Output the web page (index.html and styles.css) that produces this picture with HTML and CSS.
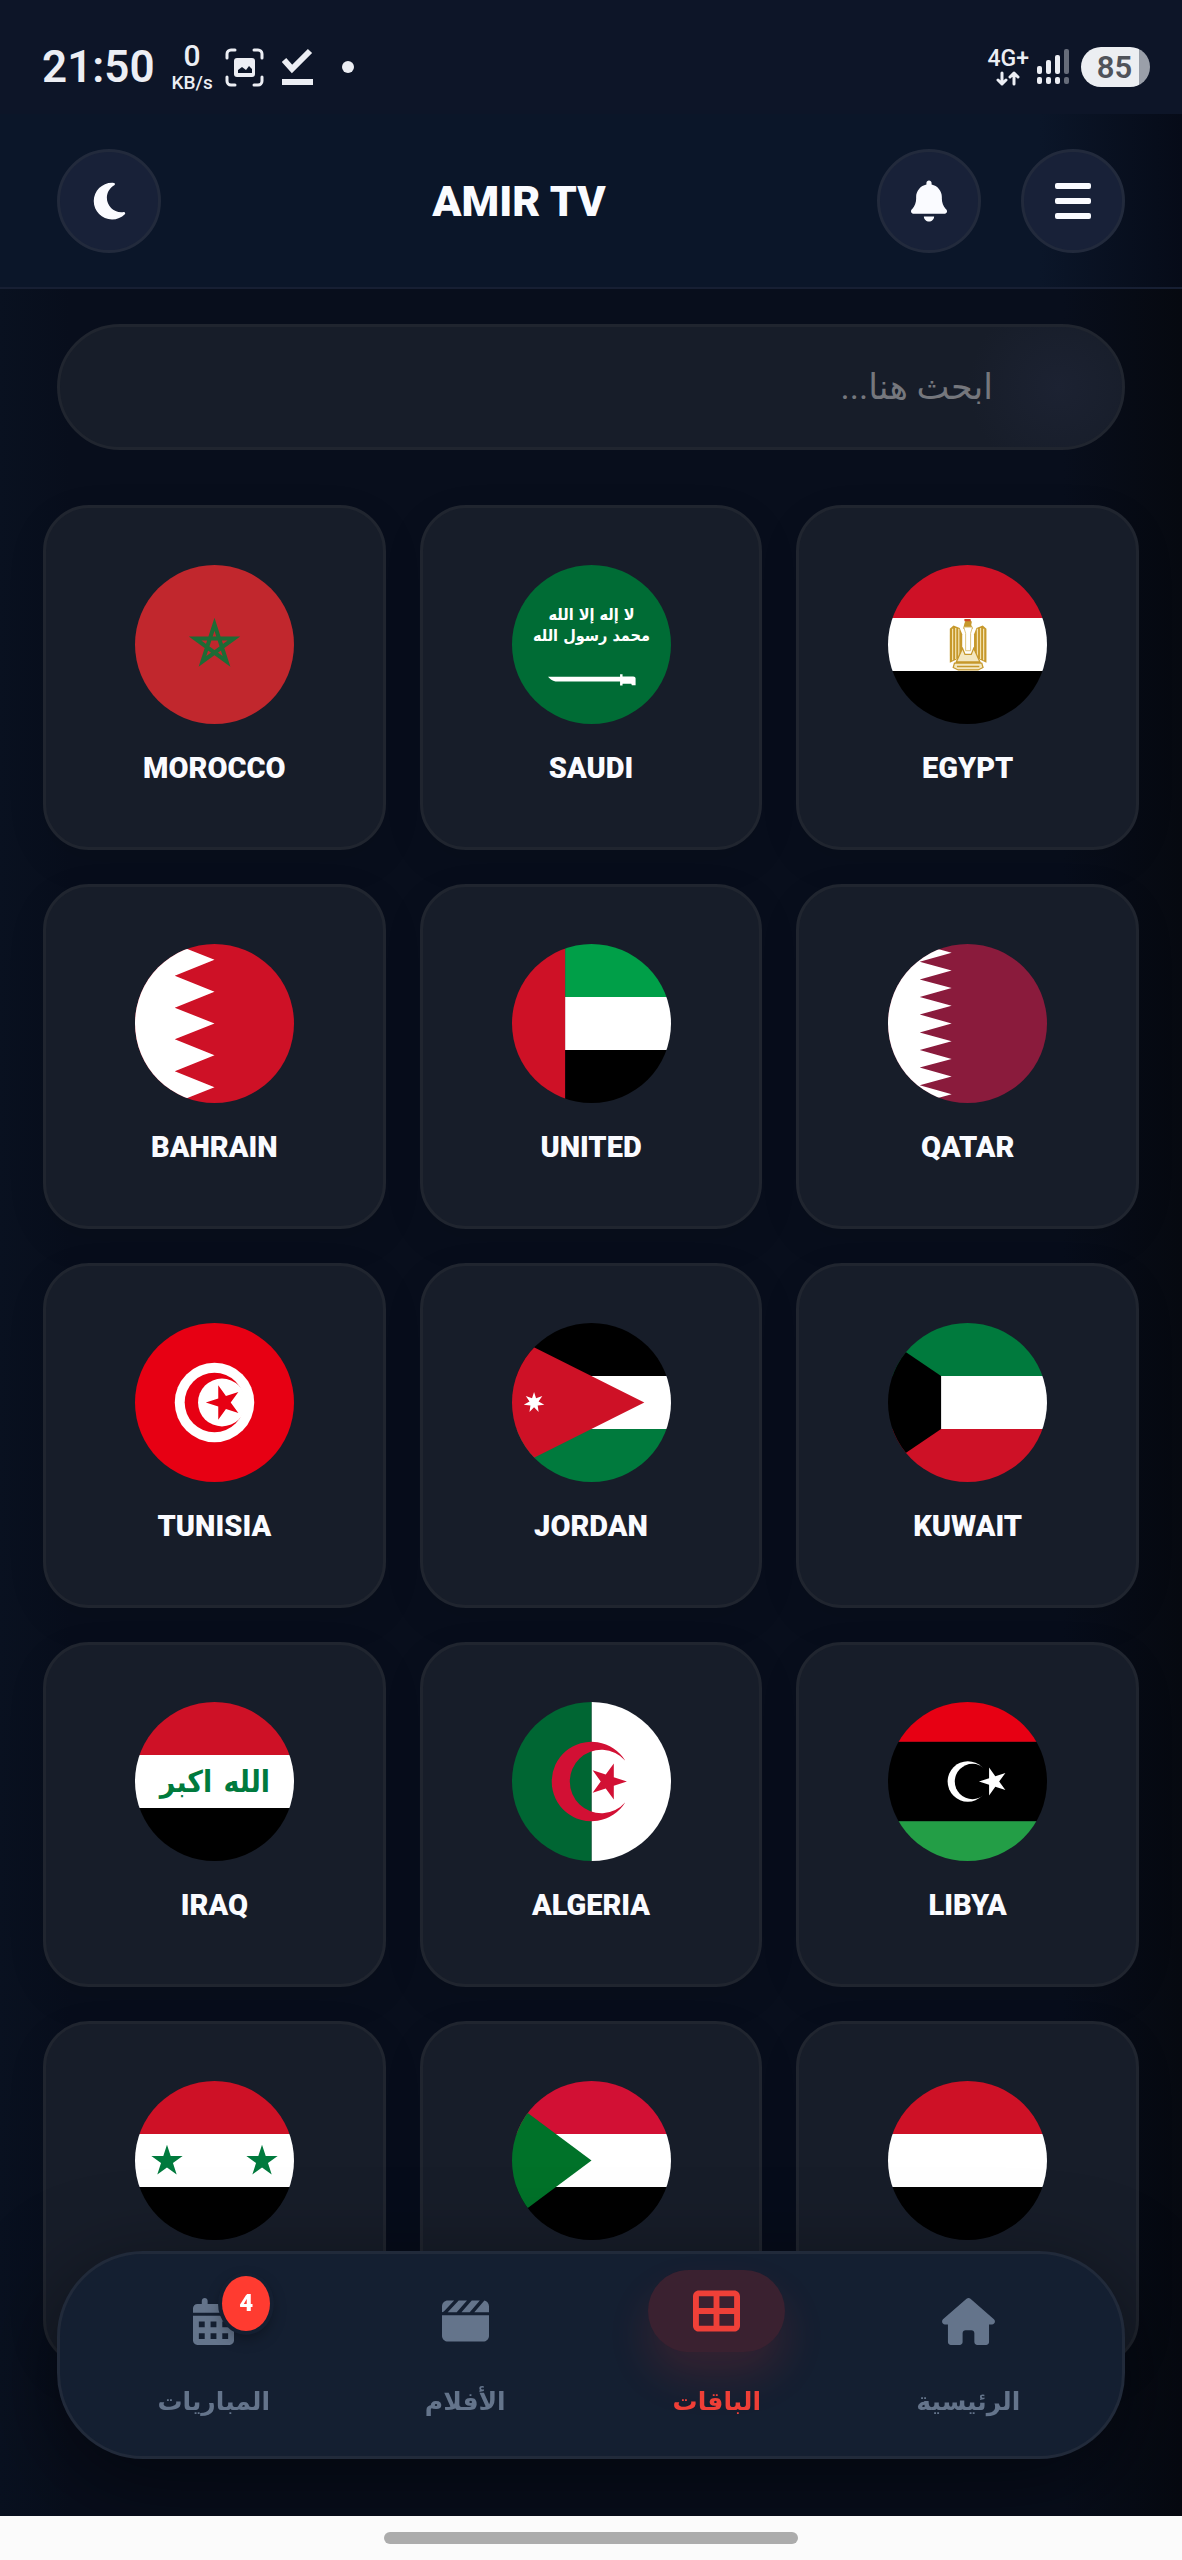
FILE: index.html
```html
<!DOCTYPE html>
<html lang="ar" dir="rtl">
<head>
  <meta charset="UTF-8">
  <meta name="viewport" content="width=device-width, initial-scale=1.0">
  <title>AMIR TV</title>
  <link rel="stylesheet" href="styles.css">
</head>
<body>
  <!-- Shared shapes -->
  <svg class="defs" width="0" height="0" aria-hidden="true">
    <defs>
      <path id="star" d="M0-100 22.5-30.9 95.1-30.9 36.3 11.8 58.8 80.9 0 38.2-58.8 80.9-36.3 11.8-95.1-30.9-22.5-30.9Z"/>
    </defs>
  </svg>

  <!-- Phone status bar -->
  <div class="status-bar" dir="ltr">
    <div class="status-left">
      <span class="clock">21:50</span>
      <span class="net-speed"><span class="net-value">0</span><span class="net-unit">KB/s</span></span>
      <svg class="scan-icon" width="39" height="39" viewBox="0 0 39 39" fill="none" stroke="#eceef4" stroke-width="3" stroke-linecap="round">
        <path d="M2 10V6a4 4 0 0 1 4-4h4M29 2h4a4 4 0 0 1 4 4v4M37 29v4a4 4 0 0 1-4 4h-4M10 37H6a4 4 0 0 1-4-4v-4"/>
        <rect x="9" y="10" width="21" height="19" rx="3" fill="#eceef4" stroke="none"/>
        <path d="M13 25v-3l4-3 4 3 3-4 3 3v4z" fill="#0c1528" stroke="none"/>
      </svg>
      <svg width="31" height="38" viewBox="0 0 31 38" fill="none" stroke="#eceef4" stroke-width="6">
        <path d="M2 12l8 9L28 3M0 34h31"/>
      </svg>
      <span class="status-dot"></span>
    </div>
    <div class="status-right">
      <span class="network">
        <span>4G+</span>
        <svg width="24" height="15" viewBox="0 0 24 15" fill="none" stroke="#eceef4" stroke-width="3" stroke-linecap="round" stroke-linejoin="round">
          <path d="M6 2v11M2 9l4 4 4-4M18 13V2M14 6l4-4 4 4"/>
        </svg>
      </span>
      <svg width="32" height="36" viewBox="0 0 32 36" fill="#eceef4">
        <rect x="0" y="17" width="5" height="8" rx="2"/>
        <rect x="9" y="11" width="5" height="14" rx="2"/>
        <rect x="18" y="6" width="5" height="19" rx="2"/>
        <rect x="27" y="0" width="5" height="25" rx="2" fill="#666c7a"/>
        <rect x="0" y="28" width="5" height="7" rx="2"/>
        <rect x="9" y="28" width="5" height="7" rx="2"/>
        <rect x="18" y="28" width="5" height="7" rx="2"/>
        <rect x="27" y="28" width="5" height="7" rx="2" fill="#666c7a"/>
      </svg>
      <span class="battery">85</span>
    </div>
  </div>

  <!-- App header -->
  <header class="header">
    <div class="header-actions">
      <button class="icon-btn" aria-label="القائمة">
        <svg width="36" height="36" viewBox="0 0 36 36" fill="#fafbff">
          <rect y="0" width="36" height="6" rx="2"/>
          <rect y="15" width="36" height="6" rx="2"/>
          <rect y="30" width="36" height="6" rx="2"/>
        </svg>
      </button>
      <button class="icon-btn" aria-label="الإشعارات">
        <svg width="36" height="42" viewBox="0 0 448 512" fill="#fafbff">
          <path d="M224 0c-17.700 0-32 14.300-32 32v19.200C119 66 64 130.600 64 208v18.800c0 47-17.300 92.400-48.500 127.600l-7.400 8.300c-8.400 9.400-10.400 22.900-5.300 34.400S19.400 416 32 416h384c12.600 0 24-7.400 29.200-18.900s3.100-25-5.300-34.400l-7.400-8.300C401.300 319.200 384 273.900 384 226.800V208c0-77.400-55-142-128-156.800V32c0-17.700-14.300-32-32-32zM269 493c12-12 19-28 19-45H160c0 17 7 33 19 45s28 19 45 19 33-7 45-19z"/>
        </svg>
      </button>
    </div>
    <h1 class="logo">AMIR TV</h1>
    <button class="icon-btn" aria-label="الوضع الليلي">
      <svg width="33" height="42" viewBox="0 0 384 512" fill="#fafbff">
        <path d="M224 32C100 32 0 132 0 256s100 224 223 224c61 0 116-24 156-64 5-5 6-12 3-18s-10-9-16-8c-10 2-20 3-30 3-97 0-176-79-176-176 0-66 36-123 90-153 6-3 9-10 8-16s-7-12-14-12c-6-1-13-1-20-1z"/>
      </svg>
    </button>
  </header>

  <main class="content">
    <!-- Search field -->
    <input type="search" class="search" placeholder="ابحث هنا..." aria-label="ابحث هنا">

    <!-- Packages grid -->
    <div class="grid">
      <a href="#" class="card">
        <svg class="flag" viewBox="0 0 512 512">
          <path fill="#fff" d="M0 171h512v170H0z"/>
          <path fill="#ce1126" d="M0 0h512v171H0z"/>
          <path d="M0 341h512v171H0z"/>
          <g fill="#c6982b">
            <path d="M199 205l12-10 20 8 8 20v70l-20 12-20 10z"/>
            <path d="M317 205l-12-10-20 8-8 20v70l20 12 20 10z"/>
            <path d="M246 188l4-10 12-3 8 8-2 10 6 12h-32z"/>
          </g>
          <path fill="#ce4a26" d="M246 174h20v7h-20z"/>
          <path fill="none" stroke="#f3e2ae" stroke-width="4" d="M208 205v102M218 203v100M228 205v94M308 205v102M298 203v100M288 205v94"/>
          <path fill="#fff" stroke="#dcc27a" stroke-width="3" d="M244 200h28l-6 20v56h-16v-56z"/>
          <path fill="#f3e7c0" stroke="#c6982b" stroke-width="4" d="M240 268l-20 44h76l-20-44-8 20h-20zM214 316h88l4 14-16 8h-64l-16-8z"/>
          <path stroke="#c6982b" stroke-width="5" d="M222 327h72"/>
        </svg>
        <span class="card-title">EGYPT</span>
      </a>
      <a href="#" class="card">
        <svg class="flag" viewBox="0 0 512 512">
          <path fill="#006c35" d="M0 0h512v512H0z"/>
          <g class="saudi-text" direction="rtl" text-anchor="middle" fill="#fff">
            <text x="256" y="178">لا إله إلا الله</text>
            <text x="256" y="244">محمد رسول الله</text>
          </g>
          <path fill="#fff" d="M116 360h232v-8h8v7h34c6 0 9 4 8 10v18h-12l-2-5h-28v6h-8v-13H140c-10-2-18-8-24-15z"/>
        </svg>
        <span class="card-title">SAUDI</span>
      </a>
      <a href="#" class="card">
        <svg class="flag" viewBox="0 0 512 512">
          <path fill="#c1272d" d="M0 0h512v512H0z"/>
          <path fill="none" stroke="#1e6b35" stroke-width="13" d="M256 191l38.800 119.400-101.600-73.800h125.600l-101.600 73.800z"/>
        </svg>
        <span class="card-title">MOROCCO</span>
      </a>

      <a href="#" class="card">
        <svg class="flag" viewBox="0 0 512 512">
          <path fill="#8a1b3c" d="M0 0h512v512H0z"/>
          <path fill="#fff" d="M0 0h102l103 28-103 29 103 28-103 29 103 28-103 29 103 28-103 28 103 29-103 29 103 28-103 28 103 29-103 28 103 29-103 28 103 29-103 28H0z"/>
        </svg>
        <span class="card-title">QATAR</span>
      </a>
      <a href="#" class="card">
        <svg class="flag" viewBox="0 0 512 512">
          <path fill="#fff" d="M171 171h341v170H171z"/>
          <path fill="#009f48" d="M171 0h341v171H171z"/>
          <path d="M171 341h341v171H171z"/>
          <path fill="#ce1126" d="M0 0h171v512H0z"/>
        </svg>
        <span class="card-title">UNITED</span>
      </a>
      <a href="#" class="card">
        <svg class="flag" viewBox="0 0 512 512">
          <path fill="#ce1126" d="M0 0h512v512H0z"/>
          <path fill="#fff" d="M0 0h128l128 51-128 51 128 52-128 51 128 51-128 51 128 51-128 52 128 51-128 51H0z"/>
        </svg>
        <span class="card-title">BAHRAIN</span>
      </a>

      <a href="#" class="card">
        <svg class="flag" viewBox="0 0 512 512">
          <path fill="#fff" d="M160 171h352v170H160z"/>
          <path fill="#007a3d" d="M0 0h512v171H0z"/>
          <path fill="#ce1126" d="M0 341h512v171H0z"/>
          <path d="M0 55l171 116v170L0 457z"/>
        </svg>
        <span class="card-title">KUWAIT</span>
      </a>
      <a href="#" class="card">
        <svg class="flag" viewBox="0 0 512 512">
          <path fill="#fff" d="M200 171h312v170H200z"/>
          <path d="M0 0h512v171H0z"/>
          <path fill="#007a3d" d="M0 341h512v171H0z"/>
          <path fill="#ce1126" d="M0 43l426 213L0 469z"/>
          <path fill="#fff" transform="translate(71 256)" d="M0-34 6.500-13.500 26.600-21.200 14.600-3.300 33.100 7.600 11.700 9.400 14.800 30.600 0 15-14.800 30.600-11.700 9.400-33.100 7.600-14.600-3.300-26.600-21.200-6.500-13.500Z"/>
        </svg>
        <span class="card-title">JORDAN</span>
      </a>
      <a href="#" class="card">
        <svg class="flag" viewBox="0 0 512 512">
          <path fill="#e70013" d="M0 0h512v512H0z"/>
          <circle cx="256" cy="256" r="128" fill="#fff"/>
          <circle cx="256" cy="256" r="96" fill="#e70013"/>
          <circle cx="280" cy="256" r="77" fill="#fff"/>
          <use href="#star" fill="#e70013" transform="translate(286 256) scale(.58) rotate(-90)"/>
        </svg>
        <span class="card-title">TUNISIA</span>
      </a>

      <a href="#" class="card">
        <svg class="flag" viewBox="0 0 512 512">
          <path d="M0 128h512v256H0z"/>
          <path fill="#e70013" d="M0 0h512v128H0z"/>
          <path fill="#239e46" d="M0 384h512v128H0z"/>
          <circle cx="257" cy="256" r="65" fill="#fff"/>
          <circle cx="272" cy="256" r="57"/>
          <use href="#star" fill="#fff" transform="translate(340 256) scale(.47) rotate(-90)"/>
        </svg>
        <span class="card-title">LIBYA</span>
      </a>
      <a href="#" class="card">
        <svg class="flag" viewBox="0 0 512 512">
          <path fill="#fff" d="M256 0h256v512H256z"/>
          <path fill="#006633" d="M0 0h256v512H0z"/>
          <path fill="#d21034" d="M365 189a128 128 0 1 0 0 134 102 102 0 1 1 0-134z"/>
          <use href="#star" fill="#d21034" transform="translate(309 256) scale(.61) rotate(90)"/>
        </svg>
        <span class="card-title">ALGERIA</span>
      </a>
      <a href="#" class="card">
        <svg class="flag" viewBox="0 0 512 512">
          <path fill="#fff" d="M0 171h512v170H0z"/>
          <path fill="#ce1126" d="M0 0h512v171H0z"/>
          <path d="M0 341h512v171H0z"/>
          <g class="iraq-text" direction="rtl" text-anchor="middle" fill="#007a3d">
            <text x="360" y="290">الله</text>
            <text x="164" y="290">اكبر</text>
          </g>
        </svg>
        <span class="card-title">IRAQ</span>
      </a>

      <a href="#" class="card" aria-label="YEMEN">
        <svg class="flag" viewBox="0 0 512 512">
          <path fill="#fff" d="M0 171h512v170H0z"/>
          <path fill="#ce1126" d="M0 0h512v171H0z"/>
          <path d="M0 341h512v171H0z"/>
        </svg>
      </a>
      <a href="#" class="card" aria-label="SUDAN">
        <svg class="flag" viewBox="0 0 512 512">
          <path fill="#fff" d="M100 171h412v170H100z"/>
          <path fill="#d21034" d="M0 0h512v171H0z"/>
          <path d="M0 341h512v171H0z"/>
          <path fill="#007229" d="M0 65l256 191L0 447z"/>
        </svg>
      </a>
      <a href="#" class="card" aria-label="SYRIA">
        <svg class="flag" viewBox="0 0 512 512">
          <path fill="#fff" d="M0 171h512v170H0z"/>
          <path fill="#ce1126" d="M0 0h512v171H0z"/>
          <path d="M0 341h512v171H0z"/>
          <g fill="#007a3d">
            <use href="#star" transform="translate(103 258) scale(.53)"/>
            <use href="#star" transform="translate(409 258) scale(.53)"/>
          </g>
        </svg>
      </a>
    </div>
  </main>

  <!-- Floating bottom navigation -->
  <nav class="bottom-nav">
    <a href="#" class="nav-item">
      <span class="nav-icon">
        <svg width="53" height="47" viewBox="0 0 576 512" fill="currentColor">
          <path d="M575.800 255.500c0 18-15 32.100-32 32.100h-32V480c0 17.700-14.300 32-32 32h-96c-17.700 0-32-14.300-32-32v-96c0-17.700-14.300-32-32-32h-64c-17.700 0-32 14.300-32 32v96c0 17.700-14.300 32-32 32H96c-17.700 0-32-14.300-32-32V287.600H32c-18 0-32-14-32-32.100 0-9 3-17 10-24L266.400 8c7-7 15-8 22-8s15 2 21 7l255.400 224.500c8 7 12 15 11 24z"/>
        </svg>
      </span>
      <span class="nav-label">الرئيسية</span>
    </a>
    <a href="#" class="nav-item active">
      <span class="nav-icon">
        <svg width="47" height="42" viewBox="0 0 512 448" fill="currentColor" fill-rule="evenodd">
          <path d="M64 0h384c35.300 0 64 28.700 64 64v320c0 35.300-28.700 64-64 64H64c-35.300 0-64-28.700-64-64V64C0 28.700 28.700 0 64 0zm0 64v128h160V64zm224 0v128h160V64zM64 256v128h160V256zm224 0v128h160V256z"/>
        </svg>
      </span>
      <span class="nav-label">الباقات</span>
    </a>
    <a href="#" class="nav-item">
      <span class="nav-icon">
        <svg width="47" height="42" viewBox="0 0 512 448" fill="currentColor">
          <path d="M64 0h68L20 120 0 128V64C0 28.700 28.700 0 64 0zM182 0h90L160 128H62zM324 0h88L302 128h-90zM462 2c29 7 50 32 50 62v64H352z"/>
          <path d="M0 160h512v224c0 35.300-28.700 64-64 64H64c-35.300 0-64-28.700-64-64z"/>
        </svg>
      </span>
      <span class="nav-label">الأفلام</span>
    </a>
    <a href="#" class="nav-item">
      <span class="nav-icon">
        <svg width="41" height="47" viewBox="0 0 448 512" fill="currentColor" fill-rule="evenodd">
          <path d="M0 160v-48c0-26.500 21.500-48 48-48h48V32c0-17.700 14.300-32 32-32s32 14.300 32 32v32h128V32c0-17.700 14.300-32 32-32s32 14.300 32 32v32h48c26.500 0 48 21.500 48 48v48z"/>
          <path d="M0 192h448v272c0 26.500-21.500 48-48 48H48c-26.500 0-48-21.500-48-48zm64 64v64h64v-64zm128 0v64h64v-64zm128 0v64h64v-64zM64 384v64h64v-64zm128 0v64h64v-64zm128 0v64h64v-64z"/>
        </svg>
        <span class="badge">4</span>
      </span>
      <span class="nav-label">المباريات</span>
    </a>
  </nav>

  <!-- Phone gesture bar -->
  <div class="gesture-bar"><span class="gesture-pill"></span></div>
</body>
</html>
```

FILE: styles.css
```css
/* Reset */
* {
  box-sizing: border-box;
  margin: 0;
  padding: 0;
}

/* Body style */
body {
  font-family: Roboto, 'DejaVu Sans', sans-serif;
  background: linear-gradient(to right, #091120, #080e1c 6%, #080e1c 90%, #060910);
  color: #fafbff;
  min-height: 100vh;
  overflow-x: hidden;
}

a {
  color: inherit;
  text-decoration: none;
}

.defs {
  position: absolute;
}

/* Status bar */
.status-bar {
  display: flex;
  justify-content: space-between;
  align-items: center;
  height: 114px;
  padding: 20px 32px 0 42px;
  background-color: #0d1528;
  color: #eceef4;
}

.status-left,
.status-right {
  display: flex;
  align-items: center;
}

.status-left {
  gap: 17px;
}

.status-right {
  gap: 8px;
}

.clock {
  font-size: 44px;
  font-weight: 600;
}

.net-speed {
  display: flex;
  flex-direction: column;
  align-items: center;
  font-weight: 500;
}

.net-value {
  font-size: 30px;
  line-height: 32px;
}

.net-unit {
  font-size: 19px;
  line-height: 22px;
}

.scan-icon {
  margin: 0 1px 0 -5px;
}

.status-dot {
  width: 12px;
  height: 12px;
  margin-left: 12px;
  border-radius: 50%;
  background-color: #eceef4;
}

.network {
  display: flex;
  flex-direction: column;
  align-items: center;
  gap: 2px;
  font-size: 23px;
  font-weight: 500;
  line-height: 20px;
}

.battery {
  width: 69px;
  height: 40px;
  margin-left: 4px;
  padding-right: 2px;
  border-radius: 20px;
  background: linear-gradient(to right, #eceef2 84%, #9a9fa9 84%);
  color: #50535a;
  font-size: 31px;
  font-weight: 600;
  line-height: 41px;
  text-align: center;
}

/* Header */
.header {
  display: flex;
  justify-content: space-between;
  align-items: center;
  padding: 35px 57px 34px;
  background: linear-gradient(to right, #0b1629 88%, #060b18);
  border-bottom: 2px solid #171f33;
}

.header-actions {
  display: flex;
  gap: 40px;
}

.icon-btn {
  display: flex;
  align-items: center;
  justify-content: center;
  width: 104px;
  height: 104px;
  border: 3px solid #222a3c;
  border-radius: 50%;
  background-color: #182138;
  cursor: pointer;
}

.logo {
  font-size: 43px;
  font-weight: 900;
}

/* Main content */
.content {
  padding: 35px 43px 0;
}

.search {
  display: block;
  width: calc(100% - 28px);
  height: 126px;
  margin: 0 14px;
  padding: 0 129px;
  border: 3px solid #20252f;
  border-radius: 63px;
  background: radial-gradient(circle at 94% 50%, #1c2232, #171d29 90px);
  color: #fafbff;
  font-family: inherit;
  font-size: 35px;
  outline: none;
  appearance: none;
}

.search::placeholder {
  color: #75777d;
}

/* Packages grid */
.grid {
  display: grid;
  grid-template-columns: repeat(3, 1fr);
  gap: 34px;
  margin-top: 55px;
}

.card {
  display: flex;
  flex-direction: column;
  align-items: center;
  min-height: 345px;
  padding: 57px 20px 52px;
  border: 3px solid #20252f;
  border-radius: 46px;
  background-color: #171d29;
  box-shadow: 0 12px 40px rgba(0, 0, 0, 0.08);
}

.flag {
  width: 159px;
  height: 159px;
  border-radius: 50%;
}

.card-title {
  margin-top: 17px;
  font-size: 29px;
  font-weight: 900;
  line-height: 54px;
}

.saudi-text {
  font: bold 52px 'DejaVu Sans Condensed', 'DejaVu Sans', sans-serif;
}

.iraq-text {
  font: bold 96px 'DejaVu Sans Condensed', 'DejaVu Sans', sans-serif;
}

/* Bottom navigation */
.bottom-nav {
  position: fixed;
  right: 57px;
  bottom: 101px;
  left: 57px;
  display: flex;
  height: 208px;
  padding: 26px 28px 0;
  border: 3px solid #212a3a;
  border-radius: 86px;
  background-color: #141f31;
  box-shadow: 0 24px 90px rgba(0, 0, 0, 0.5);
}

.nav-item {
  display: flex;
  flex: 1;
  flex-direction: column;
  align-items: center;
  gap: 15px;
  color: #64748b;
}

.nav-icon {
  position: relative;
  display: flex;
  align-items: center;
  justify-content: center;
  width: 137px;
  height: 82px;
  border-radius: 41px;
}

.nav-label {
  font-size: 25px;
  font-weight: 700;
  line-height: 50px;
}

/* Active tab is lifted and glows */
.nav-item.active {
  color: #ef4038;
}

.active .nav-icon {
  background-color: #3a2130;
  box-shadow: 0 24px 44px rgba(255, 59, 48, 0.14);
  transform: translateY(-10px);
}

/* Matches counter */
.badge {
  position: absolute;
  top: -4px;
  right: 12px;
  width: 48px;
  height: 55px;
  border-radius: 50%;
  background-color: #ff3b30;
  box-shadow: 0 0 0 4px #141f31, 0 6px 16px rgba(0, 0, 0, 0.4);
  color: #fff;
  font-size: 24px;
  font-weight: 900;
  line-height: 55px;
  text-align: center;
}

/* Gesture bar */
.gesture-bar {
  position: fixed;
  right: 0;
  bottom: 0;
  left: 0;
  display: flex;
  align-items: center;
  justify-content: center;
  height: 44px;
  background-color: #fbfbfb;
}

.gesture-pill {
  width: 35%;
  height: 12px;
  border-radius: 6px;
  background-color: #acacac;
}
```
